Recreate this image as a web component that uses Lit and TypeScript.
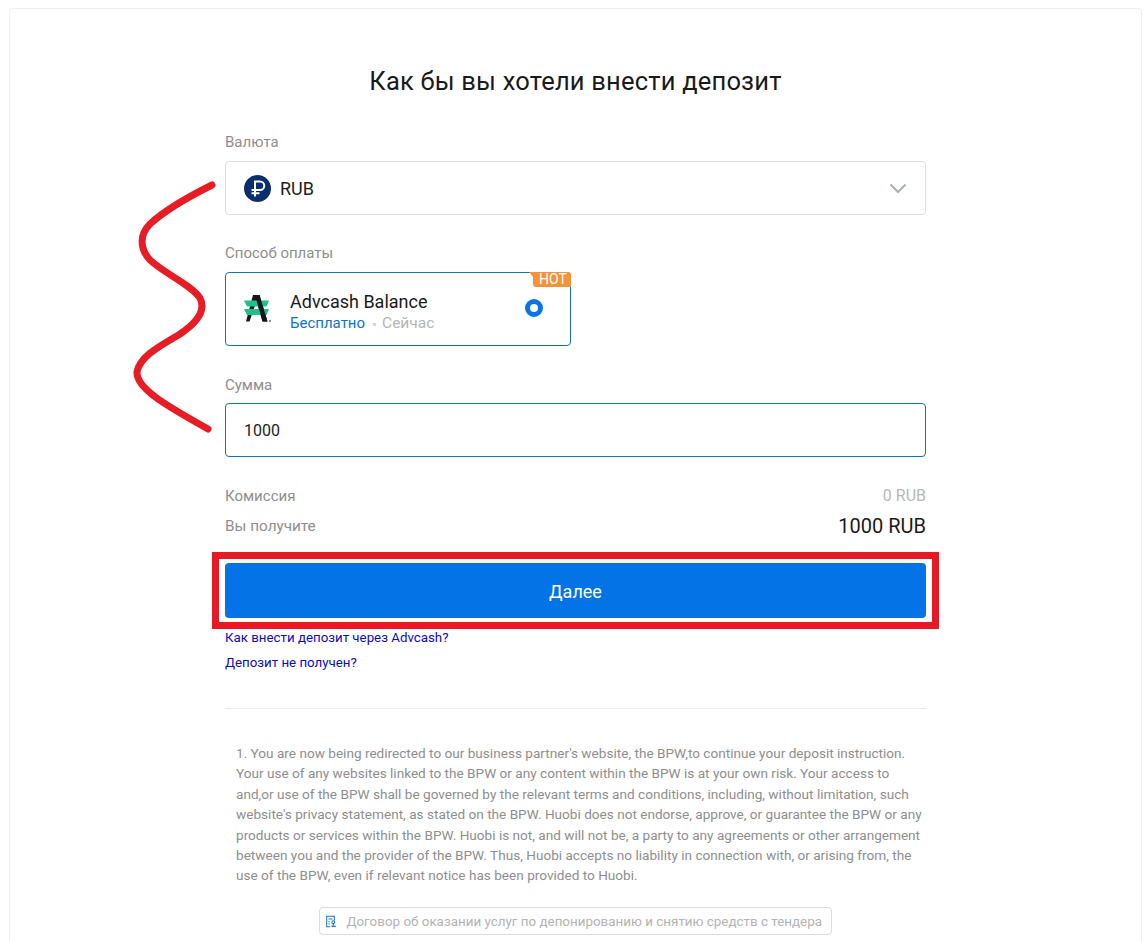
import { LitElement, html, css } from "lit";
import { customElement } from "lit/decorators.js";

@customElement("app-root")
export class AppRoot extends LitElement {
  static styles = css`
    :host { display: block; position: relative; height: 941px; overflow: hidden; background: #fff; font-family: Roboto, "Noto Sans", sans-serif; color: #1a1a1a; }
    .page { padding: 8px 5px 0 9px; }
    .card { border: 1px solid #efefef; border-radius: 4px; height: 1000px; box-sizing: border-box; padding: 0 215px; display: flex; flex-direction: column; align-items: stretch; }
    h1 { margin: 56px 0 0; font-size: 25.5px; line-height: 32px; font-weight: 400; text-align: center; color: #1a1a1a; letter-spacing: 0.2px; }
    .label { font-size: 15px; line-height: 20px; color: #8e8e8e; }
    .l1 { margin-top: 35px; }
    .field { border: 1px solid #dcdfe2; border-radius: 4px; height: 54px; box-sizing: border-box; margin-top: 9px; display: flex; align-items: center; padding: 0 18px; font-size: 16px; color: #222; }
    .rub { font-size: 18px; }
    .field.active { border-color: #1470b8; margin-top: 8px; }
    .coin { margin-right: 9px; }
    .chev { margin-left: auto; margin-right: 0; }
    .l2 { margin-top: 28px; }
    .method { position: relative; width: 346px; height: 74px; box-sizing: border-box; margin-top: 9px; border: 1px solid #1470b8; border-radius: 4px; display: flex; align-items: center; padding-left: 17px; }
    .hot { position: absolute; top: -1px; right: -1px; width: 42px; height: 15px; display: flex; justify-content: flex-end; }
    .hot span { background: #f5933a; color: #fff; font-size: 14px; line-height: 15px; width: 38px; padding-left: 2px; box-sizing: border-box; text-align: center; border-radius: 0 3px 0 3px; }
    .hot i { position: absolute; left: 0; top: 0; width: 0; height: 0; border-top: 5px solid #f5933a; border-left: 4px solid transparent; }
    .m-text { margin-left: 19px; padding-top: 6px; }
    .m-title { font-size: 18px; line-height: 22px; color: #1a1a1a; }
    .m-sub { font-size: 15px; line-height: 20px; display: flex; align-items: center; color: #b5b5b5; }
    .m-sub b { font-weight: 400; color: #0a74cf; }
    .m-sub em { font-style: normal; font-size: 15.5px; }
    .dot { width: 3px; height: 3px; background: #d4d4d4; margin: 2px 6px 0 8px; }
    .radio { position: absolute; left: 299px; top: 26px; width: 18px; height: 18px; box-sizing: border-box; border: 5px solid #0a73e6; border-radius: 50%; }
    .l3 { margin-top: 29px; }
    .row { display: flex; justify-content: space-between; align-items: center; font-size: 15px; color: #8e8e8e; }
    .r1 { margin-top: 29px; line-height: 20px; }
    .r1 span:last-child { font-size: 16px; color: #b8b8b8; }
    .r2 { margin-top: 9px; line-height: 22px; }
    .r2 span:first-child { font-size: 15.3px; }
    .r2 span:last-child { font-size: 20px; color: #1a1a1a; }
    .btn { margin-top: 26px; height: 55px; box-sizing: border-box; padding-top: 2px; background: #0373e6; border-radius: 4px; color: #fff; display: flex; align-items: center; justify-content: center; font-size: 18px; }
    .links { margin-top: 11px; display: flex; flex-direction: column; gap: 7px; font-size: 13.3px; line-height: 18px; color: #0b0bc4; }
    hr { border: 0; border-top: 1px solid #ebebeb; margin: 36px 0 0; }
    .terms { margin: 34px 0 0; padding: 0 2px 0 11px; font-size: 13.6px; line-height: 20.4px; color: #8e8e8e; }
    .doc-wrap { margin-top: 21px; display: flex; justify-content: center; }
    .doc { display: flex; align-items: center; gap: 10px; height: 28px; box-sizing: border-box; width: 513px; border: 1px solid #d9dde0; border-radius: 4px; padding: 1px 9px 0 6px; font-size: 13.4px; color: #b3b3b3; white-space: nowrap; }
    .ink { position: absolute; left: 0; top: 0; pointer-events: none; }
    .frame { position: absolute; left: 212px; top: 552px; width: 727px; height: 77px; box-sizing: border-box; border: 7px solid #e51a24; }
  `;

  render() {
    return html`
      <div class="page">
        <div class="card">
          <h1>Как бы вы хотели внести депозит</h1>
          <div class="label l1">Валюта</div>
          <div class="field">
            <svg class="coin" width="27" height="27" viewBox="0 0 27 27">
              <circle cx="13.5" cy="13.5" r="13.5" fill="#0b2f6e" />
              <path d="M11 21.5V6.5h5a4.2 4.2 0 0 1 0 8.5H7.5M7.5 18.2h8" fill="none" stroke="#fff" stroke-width="2" />
            </svg>
            <span class="rub">RUB</span>
            <svg class="chev" width="18" height="11" viewBox="0 0 18 11">
              <path d="M1.5 1.5 9 9l7.5-7.5" fill="none" stroke="#a9b0b6" stroke-width="2" />
            </svg>
          </div>
          <div class="label l2">Способ оплаты</div>
          <div class="method">
            <div class="hot"><i></i><span>HOT</span></div>
            <svg width="28" height="28" viewBox="0 0 28 28">
              <path d="M10 0h6.5l8 26.5h-5L13.5 6 6.5 26.5H3z" fill="#14171c" />
              <path d="M1 5.5h25l-2.5 6H4zM1 14h25l-2.5 6H4z" fill="#1fc08a" />
              <path d="M12 0h4.5l8 26.5h-5z" fill="#14171c" />
              <circle cx="27" cy="26" r="1" fill="#666" />
            </svg>
            <div class="m-text">
              <div class="m-title">Advcash Balance</div>
              <div class="m-sub"><b>Бесплатно</b><span class="dot"></span><em>Сейчас</em></div>
            </div>
            <span class="radio"></span>
          </div>
          <div class="label l3">Сумма</div>
          <div class="field active">1000</div>
          <div class="row r1"><span>Комиссия</span><span>0 RUB</span></div>
          <div class="row r2"><span>Вы получите</span><span>1000 RUB</span></div>
          <div class="btn">Далее</div>
          <div class="links">
            <span>Как внести депозит через Advcash?</span>
            <span>Депозит не получен?</span>
          </div>
          <hr />
          <p class="terms">1. You are now being redirected to our business partner's website, the BPW,to continue your deposit instruction. Your use of any websites linked to the BPW or any content within the BPW is at your own risk. Your access to and,or use of the BPW shall be governed by the relevant terms and conditions, including, without limitation, such website's privacy statement, as stated on the BPW. Huobi does not endorse, approve, or guarantee the BPW or any products or services within the BPW. Huobi is not, and will not be, a party to any agreements or other arrangement between you and the provider of the BPW. Thus, Huobi accepts no liability in connection with, or arising from, the use of the BPW, even if relevant notice has been provided to Huobi.</p>
          <div class="doc-wrap">
            <div class="doc">
              <svg width="15" height="17" viewBox="0 0 15 17" fill="none" stroke="#1a76c8" stroke-width="1.5">
                <path d="M6 16H1V1h11v6" />
                <path d="M3.5 5h6M3.5 9h2M3.5 12h2" />
                <circle cx="10.5" cy="9.5" r="2" />
                <path d="M8 15.5h6" stroke-width="2" />
                <path d="M10.5 11.5v3" />
              </svg>
              Договор об оказании услуг по депонированию и снятию средств с тендера
            </div>
          </div>
        </div>
      </div>
      <svg class="ink" width="1147" height="941" viewBox="0 0 1147 941">
        <path d="M212 185C190 196 165 210 150 224C140 234 139 248 150 260C165 274 190 284 200 298C206 310 198 322 180 334C160 346 140 356 137 372C136 388 165 405 208 429" fill="none" stroke="#e81c25" stroke-width="7" stroke-linecap="round" />
      </svg>
      <div class="frame"></div>
    `;
  }
}
